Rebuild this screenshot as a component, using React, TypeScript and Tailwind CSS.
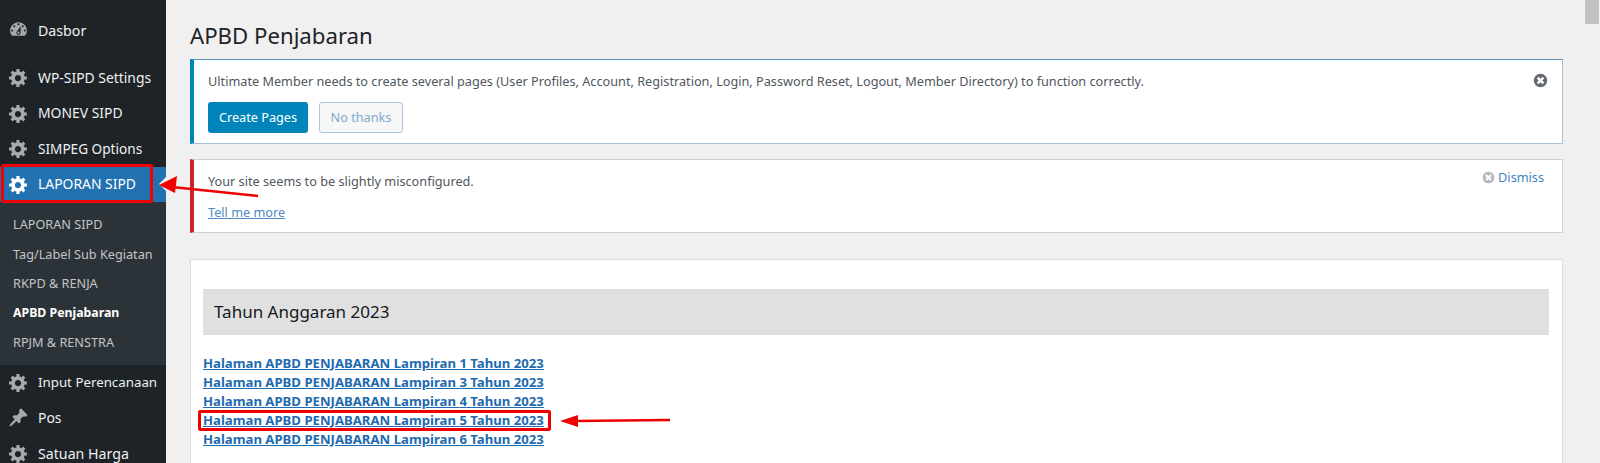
const GEAR = "M18 12h-2.18c-.17.7-.44 1.35-.81 1.93l1.54 1.54-2.1 2.1-1.54-1.54c-.58.36-1.23.63-1.91.79V19H8v-2.18c-.68-.16-1.33-.43-1.91-.79l-1.54 1.54-2.12-2.12 1.54-1.54c-.36-.58-.63-1.23-.79-1.91H1V9.03h2.17c.16-.7.44-1.35.8-1.94L2.43 5.55l2.1-2.1 1.54 1.54c.58-.37 1.24-.64 1.93-.81V2h3v2.18c.68.16 1.33.43 1.91.79l1.54-1.54 2.12 2.12-1.54 1.54c.36.59.64 1.24.8 1.94H18V12zm-8.5 1.5c1.66 0 3-1.34 3-3s-1.34-3-3-3-3 1.34-3 3 1.34 3 3 3z";
const GAUGE = "M3.76 16h12.48c1.1-1.37 1.76-3.11 1.76-5 0-4.42-3.58-8-8-8s-8 3.58-8 8c0 1.89.66 3.63 1.76 5zM10 4c.55 0 1 .45 1 1s-.45 1-1 1-1-.45-1-1 .45-1 1-1zM6 6c.55 0 1 .45 1 1s-.45 1-1 1-1-.45-1-1 .45-1 1-1zm8 0c.55 0 1 .45 1 1s-.45 1-1 1-1-.45-1-1 .45-1 1-1zm-5.37 5.55L12 7v6c0 1.1-.9 2-2 2s-2-.9-2-2c0-.57.24-1.08.63-1.45zM4 10c.55 0 1 .45 1 1s-.45 1-1 1-1-.45-1-1 .45-1 1-1zm12 0c.55 0 1 .45 1 1s-.45 1-1 1-1-.45-1-1 .45-1 1-1zm-5 3c0-.55-.45-1-1-1s-1 .45-1 1 .45 1 1 1 1-.45 1-1z";
const PIN = "M10.44 3.02l1.82-1.82 6.36 6.35-1.83 1.82c-1.05-.68-2.48-.57-3.41.36l-.75.75c-.92.93-1.04 2.35-.35 3.41l-1.83 1.82-2.41-2.41-2.8 2.79c-.42.42-3.38 2.71-3.8 2.29s1.86-3.39 2.28-3.81l2.79-2.79L4.1 9.36l1.83-1.82c1.05.69 2.48.57 3.4-.36l.75-.75c.93-.92 1.05-2.35.36-3.41z";

function MenuItem({ icon, label, active, size = "text-[13.9px]" }: { icon: string; label: string; active?: boolean; size?: string }) {
  return (
    <div className={`relative flex h-[35.5px] shrink-0 items-center ${active ? "bg-[#2271b1] text-white" : "text-[#f0f0f1]"}`}>
      <svg viewBox="0 0 20 20" className={`ml-[8px] h-[21px] w-[21px] shrink-0 ${active ? "fill-white" : "fill-[#a7aaad]"}`}>
        <path d={icon} />
      </svg>
      <span className={`ml-[9px] whitespace-nowrap pt-[1px] ${size}`}>{label}</span>
      {active && (
        <span className="absolute right-0 top-1/2 h-0 w-0 -translate-y-1/2 border-y-[7px] border-r-[7px] border-y-transparent border-r-[#f0f0f0]" />
      )}
    </div>
  );
}

function Dismiss({ className }: { className: string }) {
  return (
    <svg viewBox="0 0 20 20" className={className}>
      <path d="M10 1a9 9 0 1 0 0 18 9 9 0 0 0 0-18zm5 11.6L12.6 15 10 12.4 7.4 15 5 12.6 7.6 10 5 7.4 7.4 5 10 7.6 12.6 5 15 7.4 12.4 10z" />
    </svg>
  );
}

const YEAR_LINKS = [1, 3, 4, 5, 6];

export default function App() {
  return (
    <div className="relative flex h-[463px] w-[1600px] overflow-hidden bg-[#f0f0f0] font-['Noto_Sans','Open_Sans',sans-serif] text-[12.7px] text-[#50575e]">
      <aside className="flex w-[166px] shrink-0 flex-col overflow-hidden bg-[#1d2327] pt-[12px]">
        <MenuItem icon={GAUGE} label="Dasbor" size="text-[14.2px]" />
        <div className="h-[12.5px] shrink-0" />
        <MenuItem icon={GEAR} label="WP-SIPD Settings" />
        <MenuItem icon={GEAR} label="MONEV SIPD" />
        <MenuItem icon={GEAR} label="SIMPEG Options" size="text-[13.6px]" />
        <MenuItem icon={GEAR} label="LAPORAN SIPD" active />
        <div className="flex h-[162.5px] shrink-0 flex-col bg-[#2c3338] pl-[13px] pt-[8px] text-[12.7px] text-[#c3c4c7]">
          <div className="flex h-[29.5px] items-center">LAPORAN SIPD</div>
          <div className="flex h-[29.5px] items-center">Tag/Label Sub Kegiatan</div>
          <div className="flex h-[29.5px] items-center">RKPD &amp; RENJA</div>
          <div className="flex h-[29.5px] items-center text-[12.3px] font-bold text-white">APBD Penjabaran</div>
          <div className="flex h-[29.5px] items-center">RPJM &amp; RENSTRA</div>
        </div>
        <MenuItem icon={GEAR} label="Input Perencanaan" size="text-[13.3px]" />
        <MenuItem icon={PIN} label="Pos" />
        <MenuItem icon={GEAR} label="Satuan Harga" size="text-[14.2px]" />
      </aside>

      <main className="flex h-[463px] w-[1397px] shrink-0 flex-col overflow-hidden pl-[24px]">
        <h1 className="mt-[18px] h-[41px] shrink-0 text-[22.2px] leading-[35px] text-[#1d2327]">APBD Penjabaran</h1>

        <section className="relative h-[85px] w-[1373px] shrink-0 border border-l-[4px] border-[#a5bfd6] border-t-[#5b93c0] border-l-[#0085ba] bg-white pl-[14px] pt-[11px]">
          <p className="leading-[20px]">
            Ultimate Member needs to create several pages (User Profiles, Account, Registration, Login, Password Reset, Logout, Member Directory) to function correctly.
          </p>
          <div className="mt-[11px] flex gap-[11px]">
            <button className="flex h-[31px] w-[100px] items-center justify-center rounded-[3px] bg-[#0085ba] text-white">Create Pages</button>
            <button className="flex h-[31px] w-[84px] items-center justify-center rounded-[3px] border border-[#a9c4dc] bg-[#f6f7f7] text-[#7fa9cc]">No thanks</button>
          </div>
          <Dismiss className="absolute right-[14px] top-[13px] h-[15px] w-[15px] fill-[#646970]" />
        </section>

        <section className="relative mt-[15px] h-[74px] w-[1373px] shrink-0 border border-l-[4px] border-[#cfcfcf] border-l-[#c9252c] bg-white pl-[14px] pt-[11px]">
          <p className="leading-[20px]">Your site seems to be slightly misconfigured.</p>
          <a className="mt-[11px] block leading-[20px] text-[#4f8ac0] underline">Tell me more</a>
          <div className="absolute right-[18px] top-[7px] flex items-center gap-[3px] text-[#3f84bd]">
            <Dismiss className="h-[13px] w-[13px] fill-[#b4b9be]" />
            <span className="leading-[20px]">Dismiss</span>
          </div>
        </section>

        <section className="mt-[26px] h-[210px] w-[1373px] shrink-0 border border-[#dcdcde] bg-white pl-[12px] pr-[13px] pt-[29px]">
          <h2 className="flex h-[46px] items-center bg-[#e0e0e0] pl-[11px] text-[17px] text-[#14181b]">Tahun Anggaran 2023</h2>
          <div className="mt-[19px] flex flex-col">
            {YEAR_LINKS.map((n) => (
              <a key={n} className="block h-[19px] text-[13.15px] font-bold leading-[19px] text-[#1e6ab0] underline">
                Halaman APBD PENJABARAN Lampiran {n} Tahun 2023
              </a>
            ))}
          </div>
        </section>
      </main>

      <div className="ml-[19px] w-[18px] shrink-0 bg-[#f1f1f1] pl-[3px]">
        <div className="h-[24px] w-[14px] bg-[#c1c1c1]" />
      </div>

      {/* Annotations drawn on top of the screenshot */}
      <div className="absolute left-[1px] top-[164px] h-[39px] w-[152px] rounded-[2px] border-[3px] border-[#f00000]" />
      <div className="absolute left-[198px] top-[410px] h-[21px] w-[353px] rounded-[2px] border-[3px] border-[#f00000]" />
      <svg className="absolute left-0 top-0 h-[463px] w-[1600px]" viewBox="0 0 1600 463" fill="none">
        <line x1="258" y1="196" x2="172" y2="187" stroke="#f00000" strokeWidth="2.5" />
        <polygon points="159,185 177,176 175,193" fill="#f00000" />
        <line x1="670" y1="420" x2="575" y2="421" stroke="#f00000" strokeWidth="2.5" />
        <polygon points="560,421 578,415 578,427" fill="#f00000" />
      </svg>
    </div>
  );
}
